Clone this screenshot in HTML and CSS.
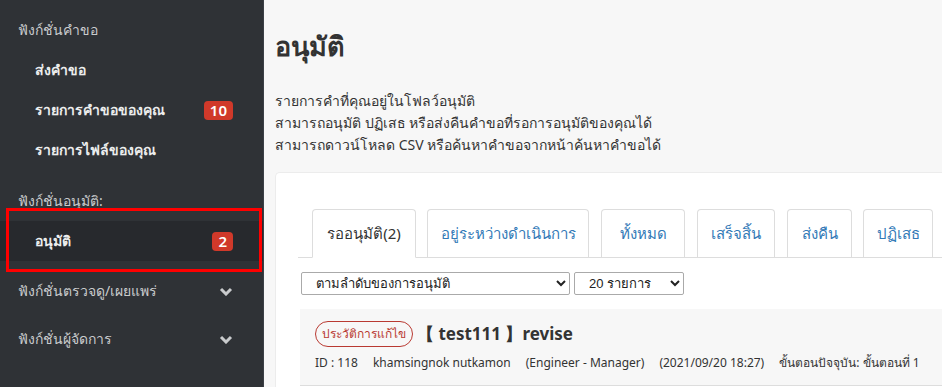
FILE: index.html
```html
<!DOCTYPE html>
<html lang="th">
<head>
<meta charset="utf-8">
<title>อนุมัติ</title>
<link rel="stylesheet" href="styles.css">
</head>
<body>
<aside class="sidebar">
  <div class="sec">ฟังก์ชั่นคำขอ</div>
  <a class="item">ส่งคำขอ</a>
  <a class="item">รายการคำขอของคุณ <span class="badge">10</span></a>
  <a class="item">รายการไฟล์ของคุณ</a>
  <div class="sec sec-gap">ฟังก์ชั่นอนุมัติ:</div>
  <a class="item active">อนุมัติ <span class="badge">2</span></a>
  <div class="sec sec-fold sec-fold-first">ฟังก์ชั่นตรวจดู/เผยแพร่
    <svg class="chev" width="14" height="9" viewBox="0 0 14 9"><polyline points="2,2 7,7 12,2" fill="none" stroke="currentColor" stroke-width="3"/></svg>
  </div>
  <div class="sec sec-fold">ฟังก์ชั่นผู้จัดการ
    <svg class="chev" width="14" height="9" viewBox="0 0 14 9"><polyline points="2,2 7,7 12,2" fill="none" stroke="currentColor" stroke-width="3"/></svg>
  </div>
  <div class="annot"></div>
</aside>
<main class="main">
  <h1 class="title">อนุมัติ</h1>
  <p class="desc">รายการคำที่คุณอยู่ในโฟลว์อนุมัติ<br>สามารถอนุมัติ ปฏิเสธ หรือส่งคืนคำขอที่รอการอนุมัติของคุณได้<br>สามารถดาวน์โหลด CSV หรือค้นหาคำขอจากหน้าค้นหาคำขอได้</p>
  <section class="card">
    <nav class="tabs">
      <span class="tab t1 active">รออนุมัติ(2)</span>
      <span class="tab t2">อยู่ระหว่างดำเนินการ</span>
      <span class="tab t3">ทั้งหมด</span>
      <span class="tab t4">เสร็จสิ้น</span>
      <span class="tab t5">ส่งคืน</span>
      <span class="tab t6">ปฏิเสธ</span>
    </nav>
    <div class="filters">
      <select class="sel sel-order"><option>ตามลำดับของการอนุมัติ</option></select>
      <select class="sel sel-count"><option>20 รายการ</option></select>
    </div>
    <div class="row">
      <div class="row-head">
        <span class="pill">ประวัติการแก้ไข</span>
        <span class="row-title">【 test111 】revise</span>
      </div>
      <div class="meta">
        <span>ID : 118</span>
        <span>khamsingnok nutkamon</span>
        <span>(Engineer - Manager)</span>
        <span>(2021/09/20 18:27)</span>
        <span>ขั้นตอนปัจจุบัน: ขั้นตอนที่ 1</span>
      </div>
    </div>
  </section>
</main>
</body>
</html>
```
FILE: styles.css
```css
* { box-sizing: border-box; }
html, body { margin: 0; height: 100%; }
body {
  display: flex;
  background: #f7f7f7;
  font-family: "Noto Sans", "Open Sans", sans-serif;
  color: #333;
  overflow: hidden;
}
.sidebar {
  position: relative;
  width: 264px;
  flex: 0 0 264px;
  height: 387px;
  background: #2f3236;
  border-right: 1px solid #3c4046;
  padding-top: 10px;
  display: flex;
  flex-direction: column;
}
.sec {
  height: 40px;
  display: flex;
  align-items: center;
  padding-left: 18px;
  color: #c9cbcd;
  font-size: 14px;
}
.sec-gap { margin-top: 11px; }
.sec-fold {
  height: 48px;
  justify-content: space-between;
  padding-right: 30px;
}
.sec-fold-first { margin-top: 6px; }
.chev { color: #c9cbcd; }
.item {
  height: 40px;
  display: flex;
  align-items: center;
  justify-content: space-between;
  padding: 0 30px 0 35px;
  color: #eceded;
  font-size: 14px;
  font-weight: 600;
}
.item.active { background: #27292d; }
.badge {
  background: #d0392a;
  color: #fff;
  border-radius: 4px;
  font-size: 15px;
  font-weight: 600;
  line-height: 19px;
  padding: 0 6px;
}
.annot {
  position: absolute;
  left: 6px;
  top: 208px;
  width: 256px;
  height: 64px;
  border: 3px solid #f00;
}
.main {
  flex: 1;
  padding-left: 11px;
  min-width: 0;
  height: 387px;
  overflow: hidden;
}
.title {
  margin: 26px 0 0;
  font-size: 27px;
  line-height: 40px;
  font-weight: bold;
  color: #333;
}
.desc {
  margin: 24px 0 0;
  font-size: 14px;
  line-height: 22px;
  color: #333;
}
.card {
  margin-top: 16px;
  background: #fff;
  border: 1px solid #ececec;
  border-right: 0;
  border-bottom: 0;
  border-radius: 5px 0 0 0;
  padding: 36px 0 0 24px;
  height: 215px;
}
.tabs {
  display: flex;
  gap: 11px;
  padding-left: 14px;
  border-bottom: 1px solid #ddd;
  margin-left: -2px;
}
.tab {
  height: 48px;
  display: flex;
  align-items: center;
  justify-content: center;
  border: 1px solid #ddd;
  border-bottom: 0;
  border-radius: 4px 4px 0 0;
  margin-bottom: -1px;
  background: #fff;
  color: #337ab7;
  font-size: 15px;
  white-space: nowrap;
}
.t1 { width: 104px; }
.t2 { width: 162px; }
.t3 { width: 84px; margin-left: 1px; }
.t4 { width: 78px; margin-left: 1px; }
.t5 { width: 65px; margin-left: 1px; }
.t6 { width: 70px; }
.tab.active {
  color: #333;
  border-bottom: 1px solid #fff;
  height: 49px;
}
.filters {
  display: flex;
  gap: 4px;
  margin-top: 14px;
  padding-left: 1px;
}
.sel {
  height: 23px;
  font-size: 13px;
  font-family: "Liberation Sans", sans-serif;
  color: #222;
  background: #fff;
  border: 1px solid #aaa;
  border-radius: 2px;
  padding: 0 4px 0 10px;
}
.sel-order { width: 269px; }
.sel-count { width: 110px; }
.row {
  margin-top: 14px;
  background: #f7f7f7;
  border-bottom: 1px solid #ddd;
  padding: 12px 15px 10px;
  height: 77px;
}
.row-head {
  display: flex;
  align-items: center;
  gap: 4px;
}
.pill {
  border: 1px solid #b93a32;
  color: #b93a32;
  border-radius: 13px;
  font-size: 12px;
  line-height: 24px;
  padding: 0 6px;
}
.row-title {
  font-size: 17px;
  font-weight: bold;
  color: #333;
}
.meta {
  display: flex;
  gap: 15px;
  margin-top: 7px;
  font-size: 12px;
  line-height: 18px;
  color: #333;
  white-space: nowrap;
}
```
